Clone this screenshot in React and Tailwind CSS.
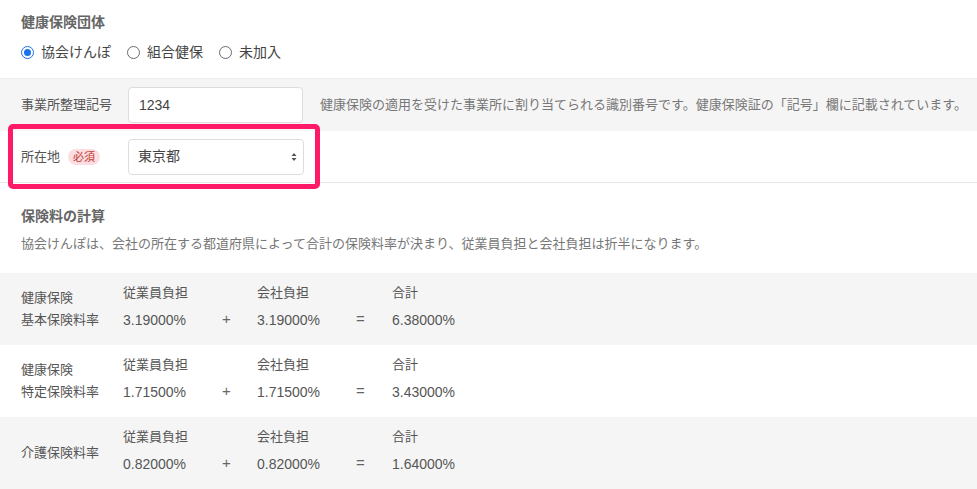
import React from "react";

const font = { fontFamily: '"Liberation Sans", "Noto Sans CJK JP", sans-serif' };

function Radio({ checked, label }) {
  return (
    <label className="flex items-center gap-[7px] mr-[16px]">
      <span
        className={
          "w-[13px] h-[13px] rounded-full flex items-center justify-center " +
          (checked ? "border-[1.5px] border-[#1a73e8]" : "border border-[#6b6b6b]")
        }
      >
        {checked && <span className="w-[7px] h-[7px] rounded-full bg-[#1a73e8]" />}
      </span>
      <span className="text-[14px] text-[#444]">{label}</span>
    </label>
  );
}

function RateRow({ label, emp, comp, total, gray }) {
  return (
    <div
      className={
        "grid grid-cols-[102px_103px_31px_103px_32px_1fr] items-center h-[72px] pl-[21px] " +
        (gray ? "bg-[#f6f5f5]" : "bg-white")
      }
    >
      <div className="text-[13px] leading-[22px] text-[#555]">{label}</div>
      <div className="flex flex-col gap-[9px] -mt-[6px]">
        <span className="text-[13px] text-[#555] leading-[18px]">従業員負担</span>
        <span className="text-[14px] text-[#555] leading-[18px]">{emp}</span>
      </div>
      <div className="text-[15px] text-[#666] mt-[21px] -ml-[4px]">+</div>
      <div className="flex flex-col gap-[9px] -mt-[6px]">
        <span className="text-[13px] text-[#555] leading-[18px]">会社負担</span>
        <span className="text-[14px] text-[#555] leading-[18px]">{comp}</span>
      </div>
      <div className="text-[15px] text-[#666] mt-[21px] -ml-[4px]">=</div>
      <div className="flex flex-col gap-[9px] -mt-[6px]">
        <span className="text-[13px] text-[#555] leading-[18px]">合計</span>
        <span className="text-[14px] text-[#555] leading-[18px]">{total}</span>
      </div>
    </div>
  );
}

export default function App() {
  return (
    <div className="w-[977px] h-[489px] overflow-hidden bg-white relative" style={font}>
      {/* 健康保険団体 */}
      <div className="pl-[21px] pt-[13px] h-[79px] border-b border-[#eeeeee]">
        <div className="text-[14px] font-bold text-[#666] leading-[18px]">健康保険団体</div>
        <div className="flex items-center mt-[11px]">
          <Radio checked label="協会けんぽ" />
          <Radio label="組合健保" />
          <Radio label="未加入" />
        </div>
      </div>

      {/* 事業所整理記号 */}
      <div className="flex items-center h-[52px] bg-[#f6f5f5] pl-[21px]">
        <div className="w-[107px] text-[13px] text-[#555]">事業所整理記号</div>
        <div className="w-[175px] h-[36px] bg-white border border-[#dddddd] rounded-[4px] flex items-center pl-[10px] text-[14px] text-[#444]">
          1234
        </div>
        <div className="ml-[17px] text-[13px] text-[#777] whitespace-nowrap">
          健康保険の適用を受けた事業所に割り当てられる識別番号です。健康保険証の「記号」欄に記載されています。
        </div>
      </div>

      {/* 所在地 */}
      <div className="flex items-center h-[52px] pl-[21px] border-b border-[#e5e5e5]">
        <div className="w-[107px] flex items-center gap-[8px]">
          <span className="text-[13px] text-[#555]">所在地</span>
          <span className="text-[11px] text-[#c0392b] bg-[#fbdde2] rounded-full px-[5px] leading-[16px]">必須</span>
        </div>
        <div className="w-[176px] h-[36px] bg-white border border-[#dddddd] rounded-[4px] flex items-center justify-between pl-[9px] pr-[6px]">
          <span className="text-[14px] text-[#444]">東京都</span>
          <svg width="6" height="10" viewBox="0 0 6 10">
            <path d="M0.5 4 L3 1 L5.5 4 Z" fill="#555" />
            <path d="M0.5 6 L3 9 L5.5 6 Z" fill="#555" />
          </svg>
        </div>
      </div>

      {/* 保険料の計算 */}
      <div className="pl-[21px] pt-[24px] h-[90px]">
        <div className="text-[14px] font-bold text-[#666] leading-[18px]">保険料の計算</div>
        <div className="text-[13px] text-[#777] mt-[10px] leading-[18px]">
          協会けんぽは、会社の所在する都道府県によって合計の保険料率が決まり、従業員負担と会社負担は折半になります。
        </div>
      </div>

      <RateRow
        gray
        label={<>健康保険<br />基本保険料率</>}
        emp="3.19000%"
        comp="3.19000%"
        total="6.38000%"
      />
      <RateRow
        label={<>健康保険<br />特定保険料率</>}
        emp="1.71500%"
        comp="1.71500%"
        total="3.43000%"
      />
      <RateRow gray label="介護保険料率" emp="0.82000%" comp="0.82000%" total="1.64000%" />

      {/* annotation highlight */}
      <div className="absolute left-[8px] top-[124px] w-[312px] h-[65px] border-[5px] border-[#ff1966] rounded-[5px] pointer-events-none" />
    </div>
  );
}
